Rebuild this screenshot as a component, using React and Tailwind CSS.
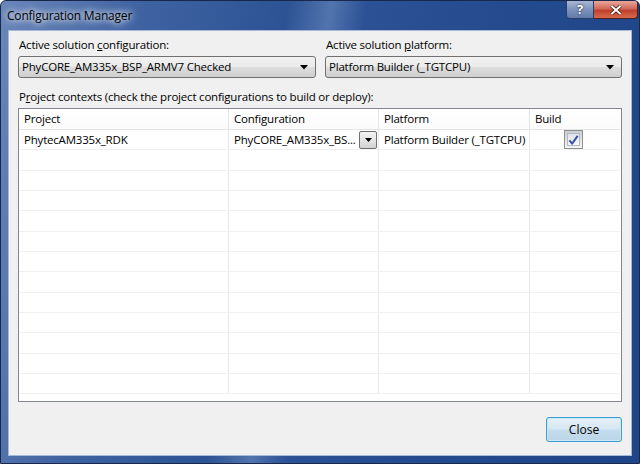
import React from 'react';

const font = { fontFamily: '"Open Sans", "Noto Sans", sans-serif' };

function ComboBox({ value, className = '' }) {
  return (
    <div className={`h-[22px] flex items-center justify-between rounded-[3px] border border-[#707070] bg-[linear-gradient(#f2f2f2,#ebebeb_48%,#dddddd_52%,#cfcfcf)] pl-[3px] pr-[7px] ${className}`}>
      <span className="whitespace-nowrap leading-none">{value}</span>
      <svg width="8" height="5" viewBox="0 0 8 5"><path d="M0 0h8L4 4.5z" fill="#000" /></svg>
    </div>
  );
}

function CellArrow() {
  return (
    <div className="w-[18px] h-[18px] flex items-center justify-center border border-[#707070] rounded-[2px] bg-[linear-gradient(#f4f4f4,#e4e4e4_50%,#d2d2d2)]">
      <svg width="7" height="4" viewBox="0 0 7 4"><path d="M0 0h7L3.5 4z" fill="#000" /></svg>
    </div>
  );
}

function CheckBox() {
  return (
    <div className="w-[19px] h-[19px] border border-[#8e8f8f] bg-[linear-gradient(#cbcfd5,#f6f6f6)] p-[2px]">
      <div className="w-full h-full bg-[linear-gradient(#dfe3e8,#f8f8f8)] border border-[#b4b8be] flex items-center justify-center">
        <svg width="12" height="12" viewBox="0 0 12 12">
          <path d="M1.5 6.5 L4.5 10 L10.5 1.5" fill="none" stroke="#3b55a0" strokeWidth="2.2" strokeLinejoin="round" />
        </svg>
      </div>
    </div>
  );
}

const cols = ['w-[210px]', 'w-[150px]', 'w-[151px]', 'flex-1'];

export default function App() {
  const emptyRows = Array.from({ length: 12 });
  return (
    <div style={font} className="w-[640px] h-[464px] flex flex-col border border-[#17284a] rounded-t-[6px] overflow-hidden text-[11.5px] tracking-[-0.2px] text-black bg-[linear-gradient(100deg,#6a86b9_0%,#3f62a1_20%,#2d5394_40%,#5274ae_46%,#2c5195_51%,#234a8d_75%,#1f4488_100%)]">
      {/* title bar */}
      <div className="h-[29px] flex items-start justify-between">
        <div className="pl-[6px] pt-[6px] text-[12px] [text-shadow:0_0_6px_#fff,0_0_10px_#fff]">Configuration Manager</div>
        <div className="flex mr-[1px]">
          <div className="w-[28px] h-[18px] flex items-center justify-center rounded-bl-[4px] border border-t-0 border-[#2a3e66] bg-[linear-gradient(#a9b8d3,#7d93bd_50%,#5f7aab)] text-white font-bold text-[13px] leading-none [text-shadow:0_0_2px_#000]">?</div>
          <div className="w-[44px] h-[18px] flex items-center justify-center rounded-br-[4px] border border-t-0 border-l-0 border-[#4b1e1a] bg-[linear-gradient(#e8a89b,#d06a5a_45%,#c0402e_55%,#d66a4d)]">
            <svg width="12" height="10" viewBox="0 0 12 10">
              <path d="M1.5 1 L10.5 9 M10.5 1 L1.5 9" stroke="#3a1410" strokeWidth="3.4" />
              <path d="M1.5 1 L10.5 9 M10.5 1 L1.5 9" stroke="#fff" strokeWidth="2" />
            </svg>
          </div>
        </div>
      </div>

      {/* client area */}
      <div className="mx-[7px] mb-[7px] flex-1 flex flex-col bg-[#f0f0f0] border border-[#a7b7d6] px-[9px] pt-[6px]">
        <div className="flex gap-[9px]">
          <div className="w-[298px] flex flex-col">
            <div className="h-[16px] leading-[16px] pl-[1px]">Active solution <u>c</u>onfiguration:</div>
            <ComboBox value="PhyCORE_AM335x_BSP_ARMV7 Checked" className="mt-[3px]" />
          </div>
          <div className="flex-1 flex flex-col">
            <div className="h-[16px] leading-[16px] pl-[1px]">Active solution <u>p</u>latform:</div>
            <ComboBox value="Platform Builder (_TGTCPU)" className="mt-[3px]" />
          </div>
        </div>

        <div className="mt-[11px] h-[16px] leading-[16px] pl-[1px]">P<u>r</u>oject contexts (check the project configurations to build or deploy):</div>

        <div className="mt-[3px] h-[294px] border border-[#828790] bg-white pr-[1px] flex flex-col">
          {/* header */}
          <div className="h-[21px] flex border-b border-[#e5e5e5] bg-[linear-gradient(#ffffff,#fbfbfb)] shrink-0">
            {['Project', 'Configuration', 'Platform', 'Build'].map((h, i) => (
              <div key={h} className={`${cols[i]} h-full flex items-center pl-[5px] ${i < 3 ? 'border-r border-[#e5e5e5]' : ''}`}>{h}</div>
            ))}
          </div>
          {/* first row */}
          <div className="h-[20.33px] flex border-b border-[#f0f0f0] shrink-0">
            <div className={`${cols[0]} flex items-center pl-[5px] border-r border-[#e3e9f2] whitespace-nowrap`}>PhytecAM335x_RDK</div>
            <div className={`${cols[1]} flex items-center justify-between pl-[5px] pr-[1px] border-r border-[#e3e9f2] whitespace-nowrap`}>
              <span>PhyCORE_AM335x_BS...</span>
              <CellArrow />
            </div>
            <div className={`${cols[2]} flex items-center pl-[5px] border-r border-[#e3e9f2] whitespace-nowrap`}>Platform Builder (_TGTCPU)</div>
            <div className={`${cols[3]} flex items-center pl-[34px]`}>
              <CheckBox />
            </div>
          </div>
          {emptyRows.map((_, r) => (
            <div key={r} className="h-[20.33px] flex border-b border-[#f0f0f0] shrink-0">
              {cols.map((c, i) => (
                <div key={i} className={`${c} ${i < 3 ? 'border-r border-[#e3e9f2]' : ''}`} />
              ))}
            </div>
          ))}
        </div>

        <div className="mt-[15px] flex justify-end">
          <button className="w-[76px] h-[25px] rounded-[3px] border border-[#3c9ccf] bg-[linear-gradient(#e6f1f8,#d6e7f3_48%,#c4dcec_52%,#bcd6e8)] shadow-[inset_0_0_0_1px_#c8eaf9] text-[12px] tracking-normal">Close</button>
        </div>
      </div>
    </div>
  );
}
